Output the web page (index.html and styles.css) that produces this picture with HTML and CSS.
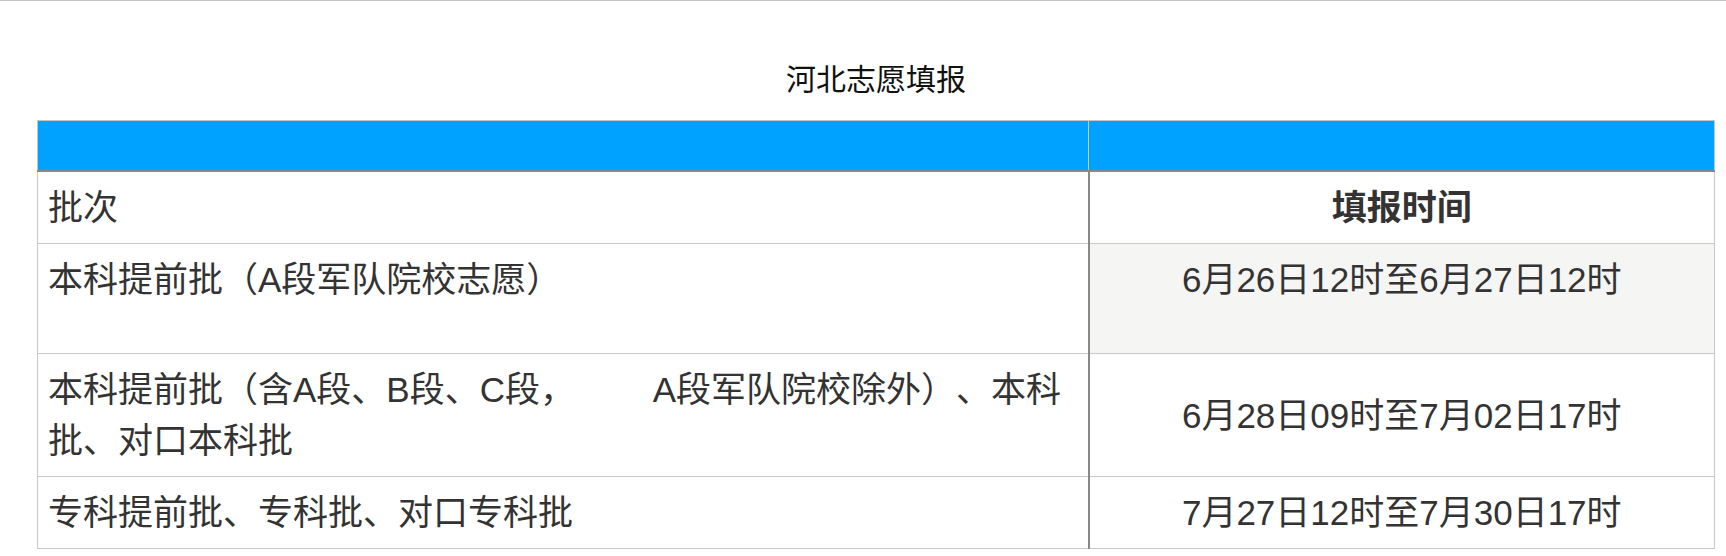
FILE: index.html
```html
<!DOCTYPE html>
<html lang="zh-CN">
<head>
<meta charset="utf-8">
<title>河北志愿填报</title>
<link rel="stylesheet" href="styles.css">
</head>
<body>
<div class="page">
  <div class="wrap">
    <h1 class="title">河北志愿填报</h1>
    <table class="schedule">
      <colgroup><col class="col-batch"><col class="col-time"></colgroup>
      <thead>
        <tr class="band"><th></th><th></th></tr>
      </thead>
      <tbody>
        <tr class="head-row"><td>批次</td><td class="time"><strong>填报时间</strong></td></tr>
        <tr class="tall"><td>本科提前批（A段军队院校志愿）</td><td class="time shade">6月26日12时至6月27日12时</td></tr>
        <tr><td>本科提前批（含A段、B段、C段，&nbsp;&nbsp;&nbsp;&nbsp;&nbsp;&nbsp;&nbsp;&nbsp;A段军队院校除外）、本科批、对口本科批</td><td class="time">6月28日09时至7月02日17时</td></tr>
        <tr><td>专科提前批、专科批、对口专科批</td><td class="time">7月27日12时至7月30日17时</td></tr>
      </tbody>
    </table>
  </div>
</div>
</body>
</html>
```
FILE: styles.css
```css
html, body {
  margin: 0;
  padding: 0;
  background: #fff;
}
body {
  font-family: "Liberation Sans", "Noto Sans CJK SC", sans-serif;
  color: #333;
  text-spacing-trim: space-all;
}
.page {
  border-top: 1px solid #c4c4c4;
  min-height: 555px;
}
.wrap {
  margin-left: 37px;
  width: 1678px;
}
.title {
  margin: 0 0 20px;
  padding-top: 59px;
  height: 40px;
  line-height: 40px;
  font-size: 30px;
  font-weight: normal;
  text-align: center;
  color: #111;
}
.schedule {
  border-collapse: collapse;
  table-layout: fixed;
  width: 1678px;
  font-size: 35px;
  line-height: 51px;
}
.col-batch {
  width: 1051px;
}
.band th {
  background: #00a2ff;
  height: 49px;
  padding: 0;
  border-top: 1px solid #c4c4c4;
  border-bottom: 2px solid #888;
  border-left: 1px solid #c8c8c8;
  border-right: 1px solid #c8c8c8;
}
.band th + th {
  border-left: 1px solid #fff;
}
.schedule td {
  padding: 10px;
  border: 1px solid #c8c8c8;
  vertical-align: middle;
  text-align: left;
}
.schedule td.time {
  text-align: center;
  border-left: 2px solid #888;
}
.schedule strong {
  font-weight: bold;
}
.tall {
  height: 110px;
}
.tall td {
  vertical-align: top;
}
.shade {
  background: #f5f5f3;
}
```
